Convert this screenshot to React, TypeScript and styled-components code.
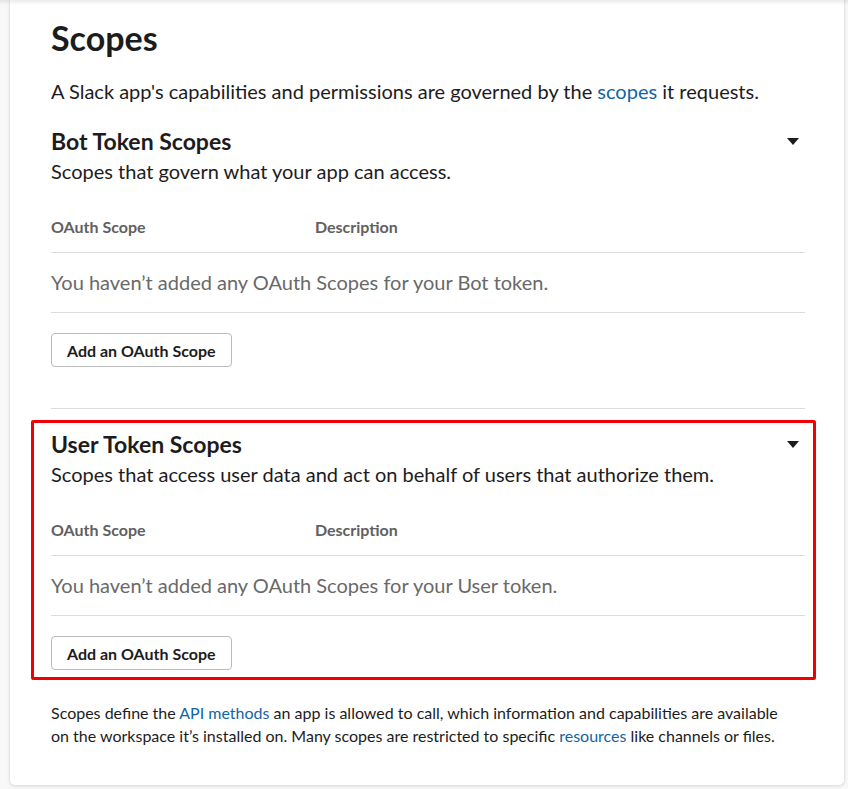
import React from "react";
import styled, { createGlobalStyle } from "styled-components";

const Global = createGlobalStyle`
  html, body { margin: 0; padding: 0; }
  body {
    background: #f8f8f8;
    font-family: Lato, "Noto Sans", "Liberation Sans", sans-serif;
    color: #1d1c1d;
    -webkit-font-smoothing: antialiased;
  }
`;

const TopShade = styled.div`
  position: fixed;
  top: 0;
  left: 0;
  right: 0;
  height: 5px;
  background: linear-gradient(rgba(0, 0, 0, 0.08), rgba(0, 0, 0, 0));
  pointer-events: none;
  z-index: 2;
`;

const Card = styled.main`
  box-sizing: border-box;
  margin: 0 0 3px 9px;
  width: 836px;
  background: #fff;
  border: 1px solid #e4e4e4;
  border-top: none;
  border-radius: 0 0 6px 6px;
  box-shadow: 0 1px 3px rgba(0, 0, 0, 0.08);
  padding: 18px 39px 38px 41px;
`;

const Title = styled.h1`
  margin: 0;
  font-size: 34px;
  line-height: 40px;
  font-weight: 700;
`;

const Intro = styled.p`
  margin: 21px 0 0;
  font-size: 20px;
  line-height: 24px;
`;

const Link = styled.a`
  color: #1264a3;
  text-decoration: none;
`;

const Section = styled.section<{ $last?: boolean }>`
  position: relative;
  padding: ${(p) => (p.$last ? "21px 0 0" : "24px 0 41px")};
  border-bottom: ${(p) => (p.$last ? "none" : "1px solid #dddddd")};
`;

const Highlight = styled.div`
  position: absolute;
  top: 11px;
  left: -20px;
  right: -11px;
  bottom: -10px;
  border: 3px solid #f00000;
  border-radius: 2px;
  pointer-events: none;
`;

const HeadRow = styled.div`
  display: flex;
  align-items: center;
  justify-content: space-between;
`;

const SectionTitle = styled.h2`
  margin: 0;
  font-size: 23px;
  line-height: 28px;
  font-weight: 700;
`;

const Caret = styled.svg`
  width: 12px;
  height: 7px;
  margin-right: 6px;
  fill: #1d1c1d;
`;

const SectionDesc = styled.p`
  margin: 4px 0 0;
  font-size: 20px;
  line-height: 24px;
`;

const Table = styled.div`
  margin-top: 34px;
`;

const TableHead = styled.div`
  display: grid;
  grid-template-columns: 35% 1fr;
  padding-bottom: 15px;
  border-bottom: 1px solid #dddddd;
  font-size: 16px;
  line-height: 20px;
  font-weight: 700;
  color: #616061;
`;

const EmptyRow = styled.div`
  padding: 17px 0 18px;
  border-bottom: 1px solid #dddddd;
  font-size: 20px;
  line-height: 24px;
  color: #696969;
`;

const Button = styled.button`
  box-sizing: border-box;
  margin-top: 20px;
  height: 34px;
  padding: 0 15px;
  background: #fff;
  border: 1px solid #bbbbbb;
  border-radius: 4px;
  font-family: inherit;
  font-size: 16px;
  font-weight: 700;
  color: #1d1c1d;
  cursor: pointer;
`;

const Footer = styled.p`
  margin: 31px 0 0;
  max-width: 745px;
  font-size: 16px;
  line-height: 23px;
`;

function ScopeSection({
  title,
  desc,
  token,
  last,
  highlighted,
}: {
  title: string;
  desc: string;
  token: string;
  last?: boolean;
  highlighted?: boolean;
}) {
  return (
    <Section $last={last}>
      {highlighted && <Highlight />}
      <HeadRow>
        <SectionTitle>{title}</SectionTitle>
        <Caret viewBox="0 0 12 7" aria-hidden="true">
          <path d="M0 0h12L6 7z" />
        </Caret>
      </HeadRow>
      <SectionDesc>{desc}</SectionDesc>
      <Table>
        <TableHead>
          <span>OAuth Scope</span>
          <span>Description</span>
        </TableHead>
        <EmptyRow>You haven’t added any OAuth Scopes for your {token} token.</EmptyRow>
      </Table>
      <Button type="button">Add an OAuth Scope</Button>
    </Section>
  );
}

export default function App() {
  return (
    <>
      <Global />
      <TopShade />
      <Card>
        <Title>Scopes</Title>
        <Intro>
          A Slack app's capabilities and permissions are governed by the <Link href="#">scopes</Link> it
          requests.
        </Intro>
        <ScopeSection
          title="Bot Token Scopes"
          desc="Scopes that govern what your app can access."
          token="Bot"
        />
        <ScopeSection
          title="User Token Scopes"
          desc="Scopes that access user data and act on behalf of users that authorize them."
          token="User"
          last
          highlighted
        />
        <Footer>
          Scopes define the <Link href="#">API methods</Link> an app is allowed to call, which information
          and capabilities are available on the workspace it’s installed on. Many scopes are restricted to
          specific <Link href="#">resources</Link> like channels or files.
        </Footer>
      </Card>
    </>
  );
}
